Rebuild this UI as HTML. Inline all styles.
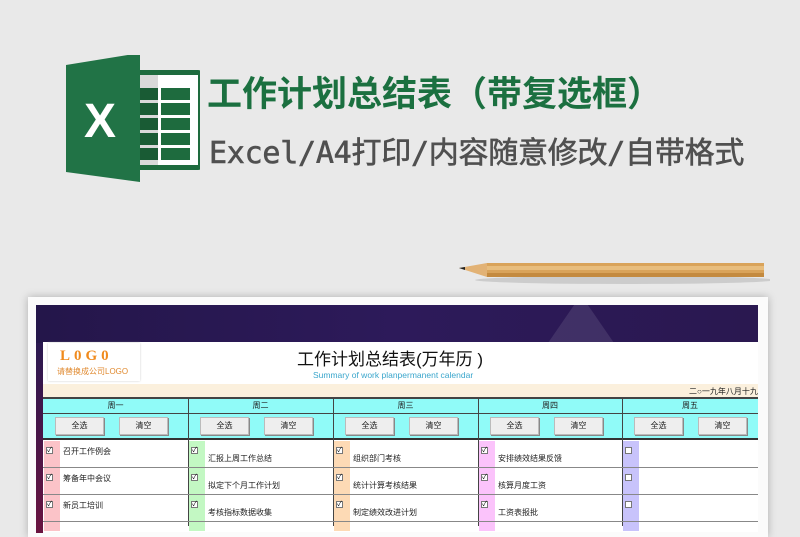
<!DOCTYPE html>
<html><head><meta charset="utf-8"><style>
*{margin:0;padding:0;box-sizing:border-box}
body{width:800px;height:526px;overflow:hidden;background:#e9e9e9;position:relative;font-family:"Liberation Sans","Noto Sans CJK SC",sans-serif}
.abs{position:absolute}
.t1{left:207px;top:66px;font-size:35px;font-weight:bold;color:#1b7040;letter-spacing:0px;white-space:nowrap;font-family:"Noto Sans CJK SC",sans-serif}
.t2{left:209px;top:128px;font-size:30px;color:#505050;white-space:nowrap;font-family:"DejaVu Sans Mono","Noto Sans CJK SC",monospace;-webkit-text-stroke:0.6px #505050;letter-spacing:-0.25px}
.paper{left:28px;top:297px;width:740px;height:240px;background:#fbfbfb;box-shadow:0 0 8px rgba(0,0,0,.25)}
.banner{left:36px;top:305px;width:722px;height:38px;background:linear-gradient(90deg,#24164a,#2d1a5a 50%,#2a1850);overflow:hidden}
.side{left:36px;top:343px;width:7px;height:190px;background:linear-gradient(#2a1850,#6a1440)}
.sheet{left:43px;top:342px;width:715px;height:190px;background:#fff}
.cell{position:absolute;font-size:8px;color:#222;text-align:center}
.btn{position:absolute;width:49px;height:18px;background:#eee;border:1px solid #bbb;box-shadow:1px 1px 0 #888;font-size:8px;text-align:center;line-height:16px;color:#222}
.cb{position:absolute;width:7px;height:7px;border:1px solid #777;background:#fff;font-size:7px;line-height:5px;text-align:center}
</style></head><body>
<svg class="abs" style="left:60px;top:55px" width="140" height="130">
<rect x="75" y="15" width="68" height="100" rx="5" fill="#1e6b3e"/>
<rect x="80" y="20" width="58" height="90" fill="#fff"/>
<g fill="#1e6b3e">
<rect x="78" y="33" width="20" height="12"/><rect x="101" y="33" width="29" height="12"/>
<rect x="78" y="48" width="20" height="12"/><rect x="101" y="48" width="29" height="12"/>
<rect x="78" y="63" width="20" height="12"/><rect x="101" y="63" width="29" height="12"/>
<rect x="78" y="78" width="20" height="12"/><rect x="101" y="78" width="29" height="12"/>
<rect x="78" y="93" width="20" height="12"/><rect x="101" y="93" width="29" height="12"/>
</g>
<rect x="78" y="20" width="20" height="90" fill="#000" opacity=".15"/>
<polygon points="6,10 80,-2 80,127 6,117" fill="#217346"/>
<text x="24" y="82" font-family="Liberation Sans" font-weight="bold" font-size="48" fill="#fff">X</text>
</svg>
<div class="abs t1">工作计划总结表（带复选框）</div>
<div class="abs t2">Excel/A4打印/内容随意修改/自带格式</div>
<svg class="abs" style="left:455px;top:258px" width="315" height="30">
<ellipse cx="170" cy="22" rx="150" ry="4" fill="#000" opacity=".12"/>
<polygon points="4,10 32,5 32,19" fill="#e2b275"/>
<polygon points="4,10 10,9 10,12" fill="#222"/>
<rect x="32" y="5" width="277" height="14" fill="#d9a35a"/>
<rect x="32" y="8" width="277" height="4" fill="#e8bd7d"/>
<rect x="32" y="15" width="277" height="4" fill="#c48a3f"/>
</svg>
<div class="abs paper"></div>
<div class="abs banner"><div style="position:absolute;top:-10px;width:0;height:0;border-left:33px solid transparent;border-right:33px solid transparent;border-bottom:48px solid rgba(255,255,255,.1);left:512px"></div></div>
<div class="abs side"></div>
<div class="abs sheet"></div>
<div class="abs" style="left:48px;top:343px;width:92px;height:38px;background:#fff;box-shadow:0 0 2px #ccc"></div>
<div class="abs" style="left:60px;top:348px;font-family:'Liberation Serif';font-weight:bold;font-size:15px;color:#f08a1c;letter-spacing:4px">L0G0</div>
<div class="abs" style="left:57px;top:366px;font-size:8px;color:#e08a30">请替换成公司LOGO</div>
<div class="abs" style="left:297px;top:345px;font-size:17px;color:#111">工作计划总结表(万年历 )</div>
<div class="abs" style="left:313px;top:370px;font-size:8.5px;color:#3aa6cc">Summary of work planpermanent calendar</div>
<div class="abs" style="left:43px;top:384px;width:715px;height:13px;background:#fbf0dd"></div>
<div class="abs" style="left:689px;top:386px;font-size:8px;color:#222">二○一九年八月十九</div>
<div class="abs" style="left:43px;top:397px;width:715px;height:43px;background:#90fbf8;border-top:2px solid #444;border-bottom:2px solid #333"></div>
<div class="abs" style="left:43px;top:413px;width:715px;height:1px;background:#444"></div>
<div id="g"></div>
<script>
var xs=[43,188,333,478,622,758],n=["周一","周二","周三","周四","周五"],c=["#fbc3c8","#c3f8c3","#fddab5","#fbc3fb","#c8c3fb"],
t=[["召开工作例会","筹备年中会议","新员工培训"],["汇报上周工作总结","拟定下个月工作计划","考核指标数据收集"],["组织部门考核","统计计算考核结果","制定绩效改进计划"],["安排绩效结果反馈","核算月度工资","工资表报批"],["","",""]],h="";
for(var i=0;i<5;i++){var x=xs[i],w=xs[i+1]-x;
if(i>0)h+='<div class="abs" style="left:'+x+'px;top:397px;width:1px;height:129px;background:#444"></div>';
h+='<div class="cell" style="left:'+x+'px;top:400px;width:'+w+'px">'+n[i]+'</div>';
h+='<div class="btn" style="left:'+(x+12)+'px;top:417px">全选</div><div class="btn" style="left:'+(x+76)+'px;top:417px">清空</div>';
h+='<div class="abs" style="left:'+(x+1)+'px;top:441px;width:16px;height:90px;background:'+c[i]+'"></div>';
for(var r=0;r<3;r++){var y=441+r*27;
h+='<div class="abs" style="left:'+x+'px;top:'+(y+26)+'px;width:'+w+'px;height:1px;background:#888"></div>';
h+='<div class="cb" style="left:'+(x+3)+'px;top:'+(y+6)+'px">'+(i<4?'✓':'')+'</div>';
h+='<div class="cell" style="left:'+(x+20)+'px;top:'+(y+(i==0?5:12))+'px;text-align:left">'+t[i][r]+'</div>';}}
document.getElementById('g').innerHTML=h;
</script>
</body></html>
